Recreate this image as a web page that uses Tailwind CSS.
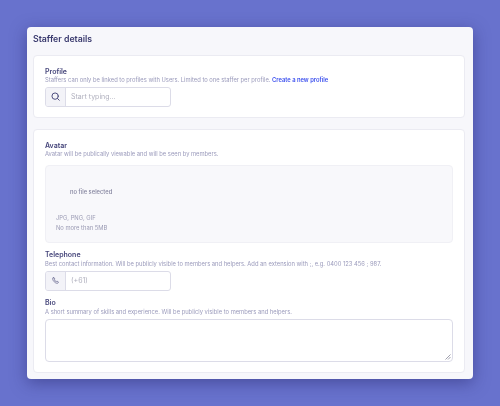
<!DOCTYPE html>
<html lang="en">
  <head>
    <meta charset="UTF-8" />
    <title>Staffer details</title>
    <script src="https://cdn.jsdelivr.net/npm/@tailwindcss/browser@4"></script>
  </head>
  <body class="bg-[#6872cd] h-[406px] overflow-hidden font-['Inter',sans-serif] pt-[27px] px-[27px]">
    <div class="w-[446px] h-[352px] bg-[#f7f7fb] rounded-[4px] shadow-[0_4px_16px_rgba(40,40,110,0.5)] pt-[7px] px-[6px] blur-[0.3px]">
      <h1 class="text-[8.75px] leading-[11px] font-semibold text-[#3a3a6e] mb-[10px]">Staffer details</h1>

      <!-- Profile -->
      <section class="h-[63px] w-[432px] bg-white border border-[#ebebf2] rounded-[4px] px-[11px] pt-[11px] mb-[11px]">
        <h2 class="text-[7px] leading-[9px] font-semibold text-[#45457a]">Profile</h2>
        <p class="text-[5.8px] leading-[8px] text-[#9a9abb]">Staffers can only be linked to profiles with Users. Limited to one staffer per profile. <a class="font-semibold text-[#3c50ee]">Create a new profile</a></p>
        <div class="flex w-[126px] h-[19.5px] mt-[3px] border border-[#dcdce8] rounded-[3px] overflow-hidden">
          <div class="w-[20px] flex items-center justify-center bg-[#f3f3f8] border-r border-[#dcdce8]">
            <svg width="9" height="9" viewBox="0 0 24 24" fill="none" stroke="#4a4a7c" stroke-width="2.6" stroke-linecap="round"><circle cx="11" cy="11" r="8.5"/><path d="M17.5 17.5L22 22"/></svg>
          </div>
          <span class="pl-[5px] text-[7px] leading-[18px] text-[#b0b0be]">Start typing...</span>
        </div>
      </section>

      <!-- Staffer info -->
      <section class="h-[243.5px] w-[432px] bg-white border border-[#ebebf2] rounded-[4px] px-[11px] pt-[11px]">
        <h2 class="text-[7px] leading-[9px] font-semibold text-[#45457a]">Avatar</h2>
        <p class="text-[5.8px] leading-[8px] text-[#9a9abb]">Avatar will be publically viewable and will be seen by members.</p>
        <div class="w-[408px] h-[78px] mt-[7px] bg-[#f8f8fb] border border-[#f0f0f5] rounded-[4px] pl-[10px] pt-[22px] text-[#9a9ab4]">
          <p class="pl-[14px] text-[5.8px] leading-[8px] font-medium text-[#85859f]">no file selected</p>
          <p class="mt-[17px] text-[5.8px] leading-[9px]">JPG, PNG, GIF</p>
          <p class="text-[5.8px] leading-[9px] mt-[0.5px]">No more than 5MB</p>
        </div>

        <h2 class="mt-[7px] text-[7px] leading-[9px] font-semibold text-[#45457a]">Telephone</h2>
        <p class="text-[5.8px] leading-[8px] mt-[1px] text-[#9a9abb]">Best contact information. Will be publicly visible to members and helpers. Add an extension with ;, e.g. 0400 123 456 ; 987.</p>
        <div class="flex w-[126px] h-[19.5px] mt-[3px] border border-[#dcdce8] rounded-[3px] overflow-hidden">
          <div class="w-[20px] flex items-center justify-center bg-[#f3f3f8] border-r border-[#dcdce8]">
            <svg width="7" height="7" viewBox="0 0 24 24" fill="none" stroke="#6a6a90" stroke-width="2.6" stroke-linecap="round"><path d="M4 3l3-1 3 5-2 2.5c1 3 3.500 5.500 6.500 6.500L17 14l5 3-1 3c-1 2-3 2-5 1.500C10 20 4 14 2.500 8 2 6 2.500 4 4 3z"/></svg>
          </div>
          <span class="pl-[5px] text-[7px] leading-[18px] text-[#b0b0be]">(+61)</span>
        </div>

        <h2 class="mt-[7px] text-[7px] leading-[9px] font-semibold text-[#45457a]">Bio</h2>
        <p class="text-[5.8px] leading-[8px] mt-[1px] text-[#9a9abb]">A short summary of skills and experience. Will be publicly visible to members and helpers.</p>
        <div class="relative w-[408px] h-[43px] mt-[3.5px] border border-[#dcdce8] rounded-[4px]">
          <svg class="absolute right-[1px] bottom-[1px]" width="6" height="6" viewBox="0 0 6 6" stroke="#77778a" stroke-width="0.7"><path d="M0.500 5.500L5.500 0.500M3 5.500L5.500 3"/></svg>
        </div>
      </section>
    </div>
  </body>
</html>
